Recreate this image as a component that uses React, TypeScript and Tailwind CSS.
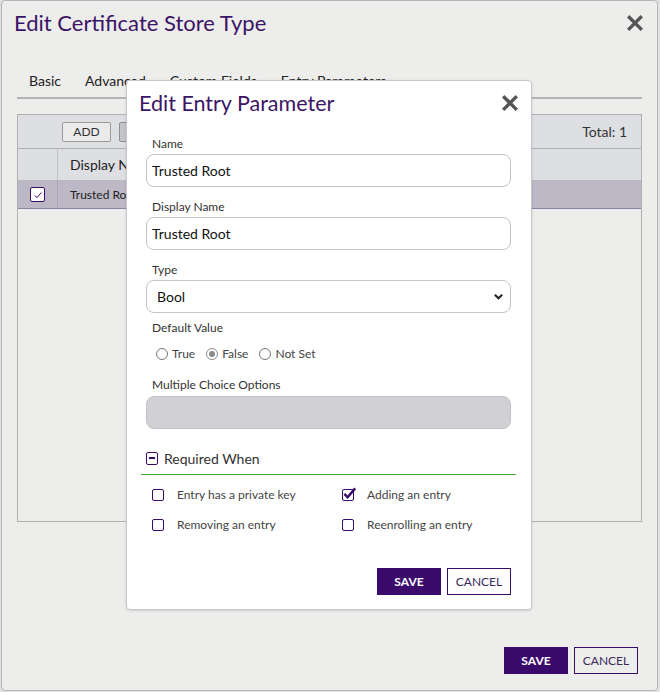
import React from "react";

function CloseIcon({ className }: { className?: string }) {
  return (
    <svg viewBox="0 0 16 16" className={className}>
      <path
        d="M3 3 L13 13 M13 3 L3 13"
        stroke="#555555"
        strokeWidth="3"
        strokeLinecap="square"
        fill="none"
      />
    </svg>
  );
}

function Field({ label, value }: { label: string; value: string }) {
  return (
    <div className="flex flex-col mb-[12px]">
      <span className="h-4 leading-4 text-[12px] text-[#333] pl-[6px]">{label}</span>
      <div className="mt-[2px] h-[33px] rounded-[8px] border border-[#c4c2c8] bg-white flex items-center pl-[5px] text-[14px] text-[#111]">
        {value}
      </div>
    </div>
  );
}

function Radio({ label, checked }: { label: string; checked?: boolean }) {
  return (
    <div className="flex items-center gap-[4px]">
      <span
        className={`w-[12px] h-[12px] rounded-full border bg-white flex items-center justify-center ${
          checked ? "border-[#8d8d8d]" : "border-[#767676]"
        }`}
      >
        {checked && <span className="w-[6px] h-[6px] rounded-full bg-[#8a8a8a]" />}
      </span>
      <span className="text-[12px] text-[#444]">{label}</span>
    </div>
  );
}

function Check({ label, checked }: { label: string; checked?: boolean }) {
  return (
    <div className="flex items-center h-5">
      <span className="relative w-[12px] h-[12px] rounded-[2px] border-[1.5px] border-[#3a0b6a] bg-white">
        {checked && (
          <svg viewBox="0 0 16 16" className="absolute -left-[1px] -top-[4px] w-[15px] h-[15px]">
            <path d="M2.5 8.5 L6 12 L14 2.5" stroke="#3a0b6a" strokeWidth="2.6" fill="none" />
          </svg>
        )}
      </span>
      <span className="ml-[13px] text-[12px] text-[#444]">{label}</span>
    </div>
  );
}

export default function App() {
  return (
    <div className="relative w-[660px] h-[692px] bg-[#e2e2e2] overflow-hidden font-['Lato','Liberation_Sans',sans-serif]">
      {/* Outer dialog */}
      <div className="ml-[1px] w-[657px] h-[691px] border border-[#b6b6b8] rounded-[4px] bg-[#ededec] flex flex-col">
        <div className="relative mt-[8px] h-[28px] pl-[12px] flex items-center">
          <h1 className="text-[22px] leading-[28px] text-[#3b1466]">Edit Certificate Store Type</h1>
          <CloseIcon className="absolute right-[13px] top-[5px] w-[18px] h-[18px]" />
        </div>

        {/* Tabs */}
        <div className="mt-[34px] mx-[15px] border-b-2 border-[#b3b3b3] flex pb-[6px]">
          {["Basic", "Advanced", "Custom Fields", "Entry Parameters"].map((t) => (
            <span key={t} className="px-3 text-[14px] leading-5 text-[#222]">
              {t}
            </span>
          ))}
        </div>

        {/* Table */}
        <div className="mt-[15px] mx-[15px] h-[408px] border border-[#b0b0b0] flex flex-col">
          <div className="h-[34px] border-b border-[#b0b0b0] bg-[#dedfe3] flex items-center pl-[44px] pr-[14px]">
            <button className="w-[49px] h-[20px] border border-[#9a9a9a] rounded-[2px] bg-[#ebebec] text-[12px] text-[#333]">
              ADD
            </button>
            <button className="ml-[8px] w-[52px] h-[20px] border border-[#8f8f8f] rounded-[2px] bg-[#c6c6c9] text-[12px] text-[#333]">
              EDIT
            </button>
            <span className="ml-auto text-[14px] text-[#333]">Total: 1</span>
          </div>
          <div className="h-[32px] bg-[#dedfe3] border-b border-[#b8b8bc] flex items-center">
            <div className="w-[40px] h-full border-r border-[#c2c2c6]" />
            <span className="ml-[12px] text-[14px] text-[#222]">Display Name</span>
            <span className="ml-[300px] text-[14px] text-[#222]">Type</span>
          </div>
          <div className="h-[28px] bg-[#bdb8c6] border-b border-[#8d82a3] flex items-center">
            <div className="w-[40px] h-full border-r border-[#aaa4b6] flex items-center justify-center">
              <span className="w-[15px] h-[15px] rounded-[2px] border-[1.5px] border-[#3a0b6a] bg-white flex items-center justify-center">
                <svg viewBox="0 0 12 12" className="w-[10px] h-[10px]">
                  <path d="M2 6.5 L4.8 9 L10 3" stroke="#3a0b6a" strokeWidth="1.2" fill="none" />
                </svg>
              </span>
            </div>
            <span className="ml-[12px] text-[12px] text-[#222]">Trusted Root</span>
          </div>
          <div className="flex-1" />
        </div>

        {/* Footer */}
        <div className="mt-[125px] mr-[19px] flex justify-end gap-[6px]">
          <button className="w-[64px] h-[27px] bg-[#3a0b6a] text-white text-[12px] font-bold">SAVE</button>
          <button className="w-[64px] h-[27px] border border-[#3a0b6a] text-[#3b2a5c] text-[12px]">CANCEL</button>
        </div>
      </div>

      {/* Inner modal */}
      <div className="absolute left-[126px] top-[80px] w-[406px] h-[530px] bg-white border border-[#c8c6cc] rounded-[4px] shadow-[0_1px_3px_rgba(0,0,0,0.12)] flex flex-col pl-[19px] pr-[20px]">
        <div className="relative mt-[8px] h-[28px] flex items-center -ml-[7px]">
          <h2 className="text-[21.5px] leading-[28px] text-[#3b1466]">Edit Entry Parameter</h2>
          <CloseIcon className="absolute -right-[8px] top-[5px] w-[18px] h-[18px]" />
        </div>

        <div className="mt-[19px]">
          <Field label="Name" value="Trusted Root" />
          <Field label="Display Name" value="Trusted Root" />

          <div className="flex flex-col">
            <span className="h-4 leading-4 text-[12px] text-[#333] pl-[6px]">Type</span>
            <div className="mt-[2px] h-[33px] rounded-[8px] border border-[#c4c2c8] bg-white flex items-center pl-[10px] pr-[6px] text-[14px] text-[#111]">
              Bool
              <svg viewBox="0 0 12 12" className="ml-auto w-[11px] h-[11px]">
                <path d="M2 4 L6 8 L10 4" stroke="#222" strokeWidth="2.2" fill="none" />
              </svg>
            </div>
          </div>

          <span className="block mt-[7px] h-4 leading-4 text-[12px] text-[#333] pl-[6px]">Default Value</span>
          <div className="mt-[8px] h-5 flex items-center gap-[11px] pl-[10px]">
            <Radio label="True" />
            <Radio label="False" checked />
            <Radio label="Not Set" />
          </div>

          <span className="block mt-[13px] h-4 leading-4 text-[12px] text-[#333] pl-[6px]">
            Multiple Choice Options
          </span>
          <div className="mt-[3px] h-[33px] rounded-[8px] border border-[#c4c2c8] bg-[#d1d1d5]" />

          {/* Required When */}
          <div className="mt-[19px] -mx-[5px] px-[5px] pb-[6px] border-b border-[#43a736] flex items-center h-[27px]">
            <span className="w-[12px] h-[13px] rounded-[2px] border-[1.5px] border-[#3a0b6a] flex items-center justify-center">
              <span className="w-[6px] h-[1.5px] bg-[#3a0b6a]" />
            </span>
            <span className="ml-[6px] text-[14px] text-[#333]">Required When</span>
          </div>

          <div className="mt-[10px] pl-[6px] flex flex-col gap-[10px]">
            <div className="flex">
              <div className="w-[190px]">
                <Check label="Entry has a private key" />
              </div>
              <Check label="Adding an entry" checked />
            </div>
            <div className="flex">
              <div className="w-[190px]">
                <Check label="Removing an entry" />
              </div>
              <Check label="Reenrolling an entry" />
            </div>
          </div>

          <div className="mt-[33px] flex justify-end gap-[6px]">
            <button className="w-[64px] h-[27px] bg-[#3a0b6a] text-white text-[12px] font-bold">SAVE</button>
            <button className="w-[64px] h-[27px] border border-[#3a0b6a] bg-white text-[#3b2a5c] text-[12px]">
              CANCEL
            </button>
          </div>
        </div>
      </div>
    </div>
  );
}
